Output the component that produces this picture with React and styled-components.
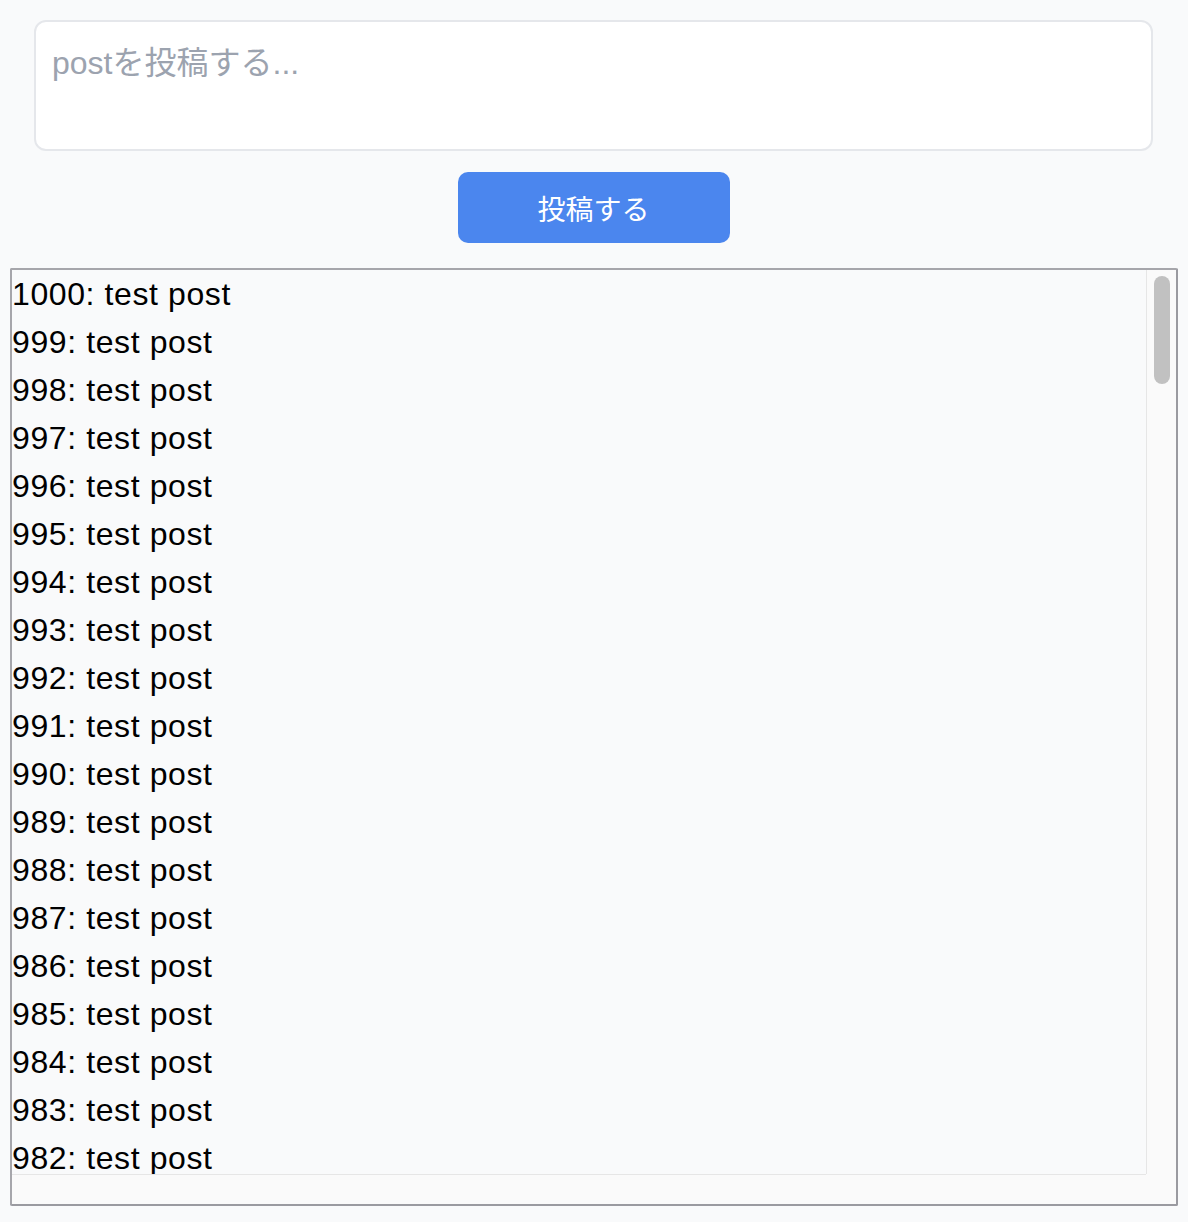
import React from "react";
import styled, { createGlobalStyle } from "styled-components";

// only the rows that fit in the box are shown
const posts = Array.from({ length: 19 }, (_, i) => ({
  id: 1000 - i,
  text: "test post",
}));

export default function App() {
  return (
    <>
      <GlobalStyle />
      <Page>
        <Composer>
          <TextArea placeholder="postを投稿する..." />
          <SubmitButton type="button">投稿する</SubmitButton>
        </Composer>
        <ListBox>
          <Viewport>
            {posts.map((post) => (
              <PostRow key={post.id}>{`${post.id}: ${post.text}`}</PostRow>
            ))}
          </Viewport>
          <ScrollTrack $vertical>
            <ScrollThumb />
          </ScrollTrack>
          <ScrollTrack />
          <ScrollCorner />
        </ListBox>
      </Page>
    </>
  );
}

const GlobalStyle = createGlobalStyle`
  html, body {
    margin: 0;
    background: #f9fafb;
  }
  body {
    font-family: "Liberation Sans", "Noto Sans CJK JP", sans-serif;
  }
`;

const Page = styled.main`
  display: flex;
  flex-direction: column;
  gap: 25px;
  padding: 20px 10px 16px;
`;

const Composer = styled.section`
  display: flex;
  flex-direction: column;
  align-items: center;
  gap: 21px;
  padding: 0 25px 0 24px;
`;

const TextArea = styled.textarea`
  box-sizing: border-box;
  width: 100%;
  height: 131px;
  padding: 17px 16px;
  border: 2px solid #e5e7eb;
  border-radius: 12px;
  background: #fff;
  resize: none;
  outline: none;
  font-family: "Liberation Sans", "Noto Sans CJK JP", sans-serif;
  font-size: 32px;
  line-height: 48px;
  color: #111827;

  &::placeholder {
    color: #9ca3af;
  }
`;

const SubmitButton = styled.button`
  width: 272px;
  height: 71px;
  border: none;
  border-radius: 10px;
  background: #4b86ee;
  color: #fff;
  font-family: "Noto Sans CJK JP", sans-serif;
  font-size: 28px;
  cursor: pointer;
`;

const ListBox = styled.div`
  box-sizing: border-box;
  height: 938px;
  display: grid;
  grid-template-columns: 1fr 30px;
  grid-template-rows: 1fr 30px;
  background: #f9fafb;
  border: 2px solid #a6a6ab;
  border-right-color: #9a9aa0;
  border-bottom-color: #9a9aa0;
  border-radius: 2px;
  overflow: hidden;
`;

const Viewport = styled.div`
  overflow: hidden;
  min-height: 0;
`;

const ScrollTrack = styled.div`
  background: #fafafa;
  ${({ $vertical }) =>
    $vertical
      ? "border-left: 1px solid #e6e6e6; padding: 6px 6px 0 7px;"
      : "border-top: 1px solid #e6e6e6;"}
`;

const ScrollThumb = styled.div`
  width: 16px;
  height: 108px;
  border-radius: 8px;
  background: #c1c1c1;
`;

const ScrollCorner = styled.div`
  background: #fafafa;
`;

const PostRow = styled.div`
  font-size: 32px;
  line-height: 48px;
  letter-spacing: 0.6px;
  color: #000;
  white-space: nowrap;
`;
